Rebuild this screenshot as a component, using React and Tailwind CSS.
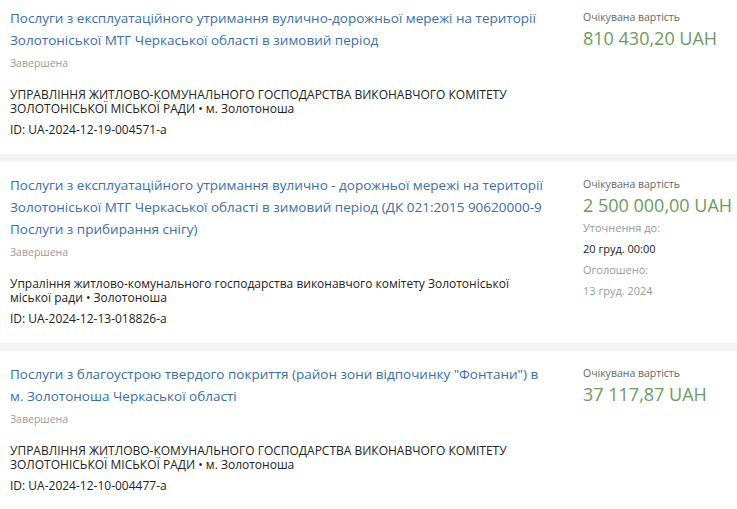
import React from "react";

const items = [
  {
    title:
      "Послуги з експлуатаційного утримання вулично-дорожньої мережі на території Золотоніської МТГ Черкаської області в зимовий період",
    status: "Завершена",
    org: "УПРАВЛІННЯ ЖИТЛОВО-КОМУНАЛЬНОГО ГОСПОДАРСТВА ВИКОНАВЧОГО КОМІТЕТУ ЗОЛОТОНІСЬКОЇ МІСЬКОЇ РАДИ",
    city: "м. Золотоноша",
    id: "ID: UA-2024-12-19-004571-a",
    value: "810 430,20 UAH",
    top: "-mt-[5px]",
  },
  {
    title:
      "Послуги з експлуатаційного утримання вулично - дорожньої мережі на території Золотоніської МТГ Черкаської області в зимовий період (ДК 021:2015 90620000-9 Послуги з прибирання снігу)",
    status: "Завершена",
    org: "Упраління житлово-комунального господарства виконавчого комітету Золотоніської міської ради",
    city: "Золотоноша",
    id: "ID: UA-2024-12-13-018826-a",
    value: "2 500 000,00 UAH",
    extra: true,
  },
  {
    title:
      "Послуги з благоустрою твердого покриття (район зони відпочинку \"Фонтани\") в м. Золотоноша Черкаської області",
    status: "Завершена",
    org: "УПРАВЛІННЯ ЖИТЛОВО-КОМУНАЛЬНОГО ГОСПОДАРСТВА ВИКОНАВЧОГО КОМІТЕТУ ЗОЛОТОНІСЬКОЇ МІСЬКОЇ РАДИ",
    city: "м. Золотоноша",
    id: "ID: UA-2024-12-10-004477-a",
    value: "37 117,87 UAH",
  },
];

function Card({ it }) {
  return (
    <div className={`bg-white flex pl-[10px] pt-[12px] pb-[15px] ${it.top || ""}`}>
      <div className="w-[548px] shrink-0">
        <div className="w-[540px] text-[13.5px] leading-[22px] text-[#3a6ea8]">{it.title}</div>
        <div className="mt-[4px] text-[10.5px] leading-[16px] text-[#9a9a9a]">{it.status}</div>
        <div className="mt-[17px] text-[12px] leading-[14px] text-[#222] pr-[30px]">
          {it.org} • {it.city}
        </div>
        <div className="mt-[5px] text-[12px] leading-[18px] text-[#222]">{it.id}</div>
      </div>
      <div className="ml-[25px] pt-[2px]">
        <div className="text-[10.5px] leading-[16px] text-[#666]">Очікувана вартість</div>
        <div className="text-[18px] leading-[26px] text-[#6d9a5e] whitespace-nowrap">{it.value}</div>
        {it.extra && (
          <div className="text-[11px] leading-[21px] -mt-[1px]">
            <div className="text-[#999]">Уточнення до:</div>
            <div className="text-[#222]">20 груд. 00:00</div>
            <div className="text-[#999]">Оголошено:</div>
            <div className="text-[#999]">13 груд. 2024</div>
          </div>
        )}
      </div>
    </div>
  );
}

export default function App() {
  return (
    <div
      className="w-[737px] h-[509px] overflow-hidden bg-[#f4f4f4] flex flex-col gap-[8px]"
      style={{ fontFamily: '"Open Sans", sans-serif' }}
    >
      {items.map((it, i) => (
        <Card key={i} it={it} />
      ))}
    </div>
  );
}
